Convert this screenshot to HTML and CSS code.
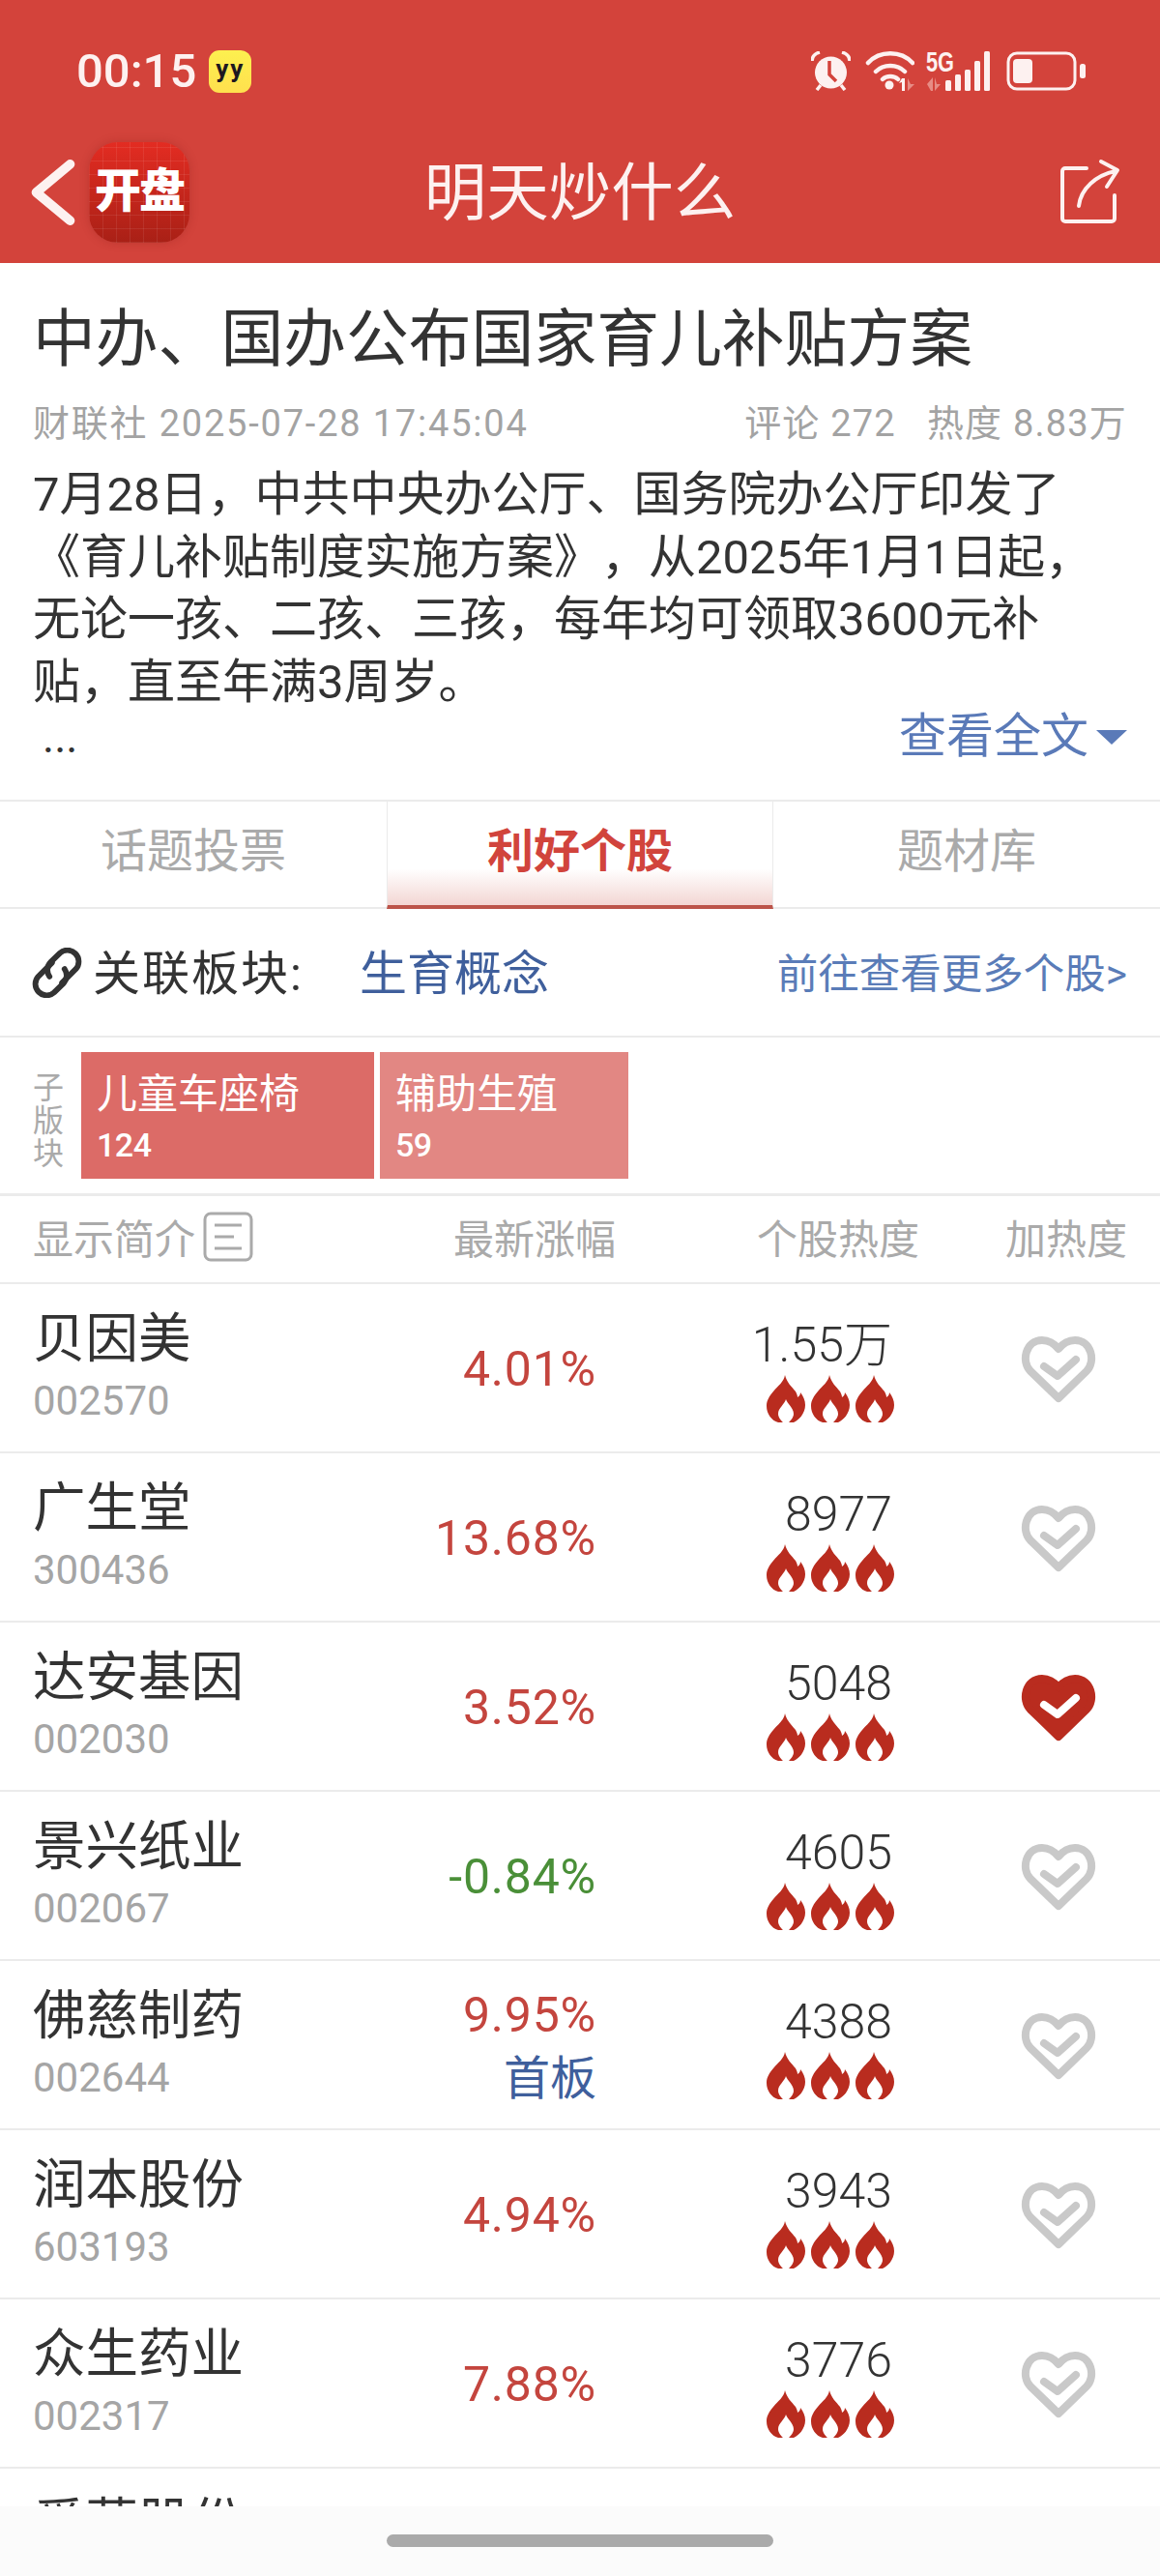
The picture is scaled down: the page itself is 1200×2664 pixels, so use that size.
FILE: index.html
```html
<!DOCTYPE html>
<html lang="zh-CN">

<head>
  <meta charset="UTF-8">
  <title>明天炒什么</title>
  <link rel="stylesheet" href="styles.css">
</head>

<body>
  <svg class="sprite">
    <symbol id="flame" viewBox="0 0 40 49">
      <path fill="#b92c1f" d="M19 0c2 8 7 12 11 17 1 2 2 4 2 6 2-1 3-3 3-5 3 4 5 8 5 13 0 9-7 16-12 18H12C5 47 0 40 0 32c0-6 3-10 7-15 5-6 11-10 12-17z"/>
      <path fill="#fff" d="M20 25c1 4 8 9 8 15 0 4-3 7-5 9h-6c-2-2-5-5-5-9 0-6 7-10 8-15z"/>
    </symbol>
    <symbol id="heart" viewBox="0 0 78 70">
      <path fill="none" stroke="#c9c9c9" stroke-width="8" stroke-linejoin="round" d="M39 65 10 37C0 27 5 5 22 5c8 0 13 4 17 9 4-5 9-9 17-9 17 0 22 22 12 32z"/>
      <path fill="none" stroke="#c9c9c9" stroke-width="8" stroke-linecap="round" stroke-linejoin="round" d="M24 32 38 42 57 25"/>
    </symbol>
    <symbol id="heart-on" viewBox="0 0 78 70">
      <path fill="#b92c1f" stroke="#b92c1f" stroke-width="8" stroke-linejoin="round" d="M39 65 10 37C0 27 5 5 22 5c8 0 13 4 17 9 4-5 9-9 17-9 17 0 22 22 12 32z"/>
      <path fill="none" stroke="#fff" stroke-width="8" stroke-linecap="round" stroke-linejoin="round" d="M24 32 38 42 57 25"/>
    </symbol>
  </svg>

  <header class="top">
    <div class="status">
      <div class="status-left">
        <span class="time">00:15</span>
        <span class="yy">yy</span>
      </div>
      <div class="status-right">
        <svg class="ic-alarm" viewBox="0 0 41 41">
          <circle cx="20.5" cy="22" r="16.5" fill="#fdf1f0"/>
          <path d="M1 10C1 5 5 2 9 1M40 10C40 5 36 2 32 1M6 40l4-5M35 40l-4-5" fill="none" stroke="#fdf1f0" stroke-width="3.5"/>
          <path d="M19 10V24L26 31" fill="none" stroke="#d3433b" stroke-width="3.5"/>
        </svg>
        <svg class="ic-wifi" viewBox="0 2 51 41">
          <path d="M3 14C15 1 37 1 49 14M11 23C19 15 33 15 41 23M18 31C22 27 30 27 34 31" fill="none" stroke="#fdf1f0" stroke-width="4.5" stroke-linecap="round"/>
          <circle cx="25" cy="37" r="4.5" fill="#fdf1f0"/>
          <path d="M38 30h3v13h-3v-9l-3 1z" fill="#fdf1f0"/>
          <path d="M44 30v13l7-7h-4z" fill="#e78c85"/>
        </svg>
        <div class="signal">
          <span class="five-g">5G</span>
          <svg class="ic-signal" viewBox="0 0 67 41">
            <path d="M1 34l6-7v14h-2zM9 27v14l6-7h-4z" fill="#e78c85"/>
            <rect x="20" y="30" width="6" height="11" rx="1.5" fill="#fdf1f0"/>
            <rect x="30" y="24" width="6" height="17" rx="1.5" fill="#fdf1f0"/>
            <rect x="40" y="19" width="6" height="22" rx="1.5" fill="#fdf1f0"/>
            <rect x="50" y="10" width="6" height="31" rx="1.5" fill="#fdf1f0"/>
            <rect x="60" y="0" width="6" height="41" rx="1.5" fill="#fdf1f0"/>
          </svg>
        </div>
        <svg class="ic-battery" viewBox="0 0 82 41">
          <rect x="2" y="2" width="69" height="37" rx="9" fill="none" stroke="#fdf1f0" stroke-width="3"/>
          <rect x="7" y="8" width="20" height="25" rx="4" fill="#fdf1f0"/>
          <rect x="76" y="13" width="6" height="15" rx="2.5" fill="#fdf1f0"/>
        </svg>
      </div>
    </div>
    <nav class="bar">
      <div class="bar-left">
        <svg class="ic-back" viewBox="0 0 48 70">
          <path d="M42 5 6 35l36 30" fill="none" stroke="#fdf1f0" stroke-width="10" stroke-linecap="round" stroke-linejoin="round"/>
        </svg>
        <div class="logo">开盘</div>
      </div>
      <h1 class="bar-title">明天炒什么</h1>
      <div class="bar-right">
        <svg class="ic-share" viewBox="0 0 70 74">
          <path d="M30 11H8a3 3 0 0 0-3 3V63a3 3 0 0 0 3 3H56a3 3 0 0 0 3-3V39" fill="none" stroke="#fdf1f0" stroke-width="4" stroke-linecap="round"/>
          <path d="M22 50C24 32 40 18 60 14M45 4 62 13 51 30" fill="none" stroke="#fdf1f0" stroke-width="4" stroke-linecap="round" stroke-linejoin="round"/>
        </svg>
      </div>
    </nav>
  </header>

  <main class="content">
    <article class="article">
      <h2 class="article-title">中办、国办公布国家育儿补贴方案</h2>
      <div class="meta">
        <span class="meta-left">财联社 2025-07-28 17:45:04</span>
        <span class="meta-right"><span>评论 272</span><span>热度 8.83万</span></span>
      </div>
      <p class="summary">7月28日，中共中央办公厅、国务院办公厅印发了<br>《育儿补贴制度实施方案》，从2025年1月1日起，<br>无论一孩、二孩、三孩，每年均可领取3600元补<br>贴，直至年满3周岁。</p>
      <div class="more-row">
        <span class="dots">...</span>
        <span class="more">查看全文<i class="caret"></i></span>
      </div>
    </article>

    <div class="tabs">
      <div class="tab">话题投票</div>
      <div class="tab active">利好个股</div>
      <div class="tab">题材库</div>
    </div>

    <div class="sector">
      <svg class="ic-link" viewBox="6 6 40 40">
        <path d="M22 18 11 29a9 9 0 0 0 12.7 12.7L31 34.5a9 9 0 0 0 1-11.5" fill="none" stroke="#333" stroke-width="4.5" stroke-linecap="round"/>
        <path d="M30 34 41 23a9 9 0 0 0-12.7-12.7L21 17.5a9 9 0 0 0-1 11.5" fill="none" stroke="#333" stroke-width="4.5" stroke-linecap="round"/>
      </svg>
      <span class="sector-label">关联板块:</span>
      <span class="sector-name">生育概念</span>
      <span class="sector-link">前往查看更多个股&gt;</span>
    </div>

    <div class="sub">
      <div class="sub-label">子<br>版<br>块</div>
      <div class="block block-a"><span class="block-name">儿童车座椅</span><span class="block-num">124</span></div>
      <div class="block block-b"><span class="block-name">辅助生殖</span><span class="block-num">59</span></div>
    </div>

    <div class="thead">
      <div class="th-intro">显示简介
        <svg class="ic-intro" viewBox="0 0 52 52">
          <rect x="2" y="2" width="48" height="48" rx="6" fill="none" stroke="#aaa" stroke-width="3"/>
          <path d="M12 14H40M12 26H32M12 38H40" fill="none" stroke="#aaa" stroke-width="3"/>
        </svg>
      </div>
      <div class="th-pct">最新涨幅</div>
      <div class="th-heat">个股热度</div>
      <div class="th-add">加热度</div>
    </div>

    <div class="row">
      <div class="name-col"><div class="name">贝因美</div><div class="code">002570</div></div>
      <div class="pct up">4.01%</div>
      <div class="heat"><div class="heat-num">1.55万</div><div class="flames"><svg><use href="#flame"/></svg><svg><use href="#flame"/></svg><svg><use href="#flame"/></svg></div></div>
      <svg class="heart"><use href="#heart"/></svg>
    </div>
    <div class="row">
      <div class="name-col"><div class="name">广生堂</div><div class="code">300436</div></div>
      <div class="pct up">13.68%</div>
      <div class="heat"><div class="heat-num">8977</div><div class="flames"><svg><use href="#flame"/></svg><svg><use href="#flame"/></svg><svg><use href="#flame"/></svg></div></div>
      <svg class="heart"><use href="#heart"/></svg>
    </div>
    <div class="row">
      <div class="name-col"><div class="name">达安基因</div><div class="code">002030</div></div>
      <div class="pct up">3.52%</div>
      <div class="heat"><div class="heat-num">5048</div><div class="flames"><svg><use href="#flame"/></svg><svg><use href="#flame"/></svg><svg><use href="#flame"/></svg></div></div>
      <svg class="heart"><use href="#heart-on"/></svg>
    </div>
    <div class="row">
      <div class="name-col"><div class="name">景兴纸业</div><div class="code">002067</div></div>
      <div class="pct down">-0.84%</div>
      <div class="heat"><div class="heat-num">4605</div><div class="flames"><svg><use href="#flame"/></svg><svg><use href="#flame"/></svg><svg><use href="#flame"/></svg></div></div>
      <svg class="heart"><use href="#heart"/></svg>
    </div>
    <div class="row">
      <div class="name-col"><div class="name">佛慈制药</div><div class="code">002644</div></div>
      <div class="pct up">9.95%<div class="board">首板</div></div>
      <div class="heat"><div class="heat-num">4388</div><div class="flames"><svg><use href="#flame"/></svg><svg><use href="#flame"/></svg><svg><use href="#flame"/></svg></div></div>
      <svg class="heart"><use href="#heart"/></svg>
    </div>
    <div class="row">
      <div class="name-col"><div class="name">润本股份</div><div class="code">603193</div></div>
      <div class="pct up">4.94%</div>
      <div class="heat"><div class="heat-num">3943</div><div class="flames"><svg><use href="#flame"/></svg><svg><use href="#flame"/></svg><svg><use href="#flame"/></svg></div></div>
      <svg class="heart"><use href="#heart"/></svg>
    </div>
    <div class="row">
      <div class="name-col"><div class="name">众生药业</div><div class="code">002317</div></div>
      <div class="pct up">7.88%</div>
      <div class="heat"><div class="heat-num">3776</div><div class="flames"><svg><use href="#flame"/></svg><svg><use href="#flame"/></svg><svg><use href="#flame"/></svg></div></div>
      <svg class="heart"><use href="#heart"/></svg>
    </div>
    <div class="row">
      <div class="name-col"><div class="name">爱慕股份</div></div>
    </div>
  </main>

  <footer class="home">
    <div class="home-pill"></div>
  </footer>
</body>

</html>
```

FILE: styles.css
```css
* {
  box-sizing: border-box;
}

body {
  margin: 0;
  width: 1200px;
  height: 2664px;
  display: flex;
  flex-direction: column;
  overflow: hidden;
  background: #fff;
  color: #333;
  font-family: Roboto, "Noto Sans CJK SC", sans-serif;
}

.sprite {
  display: none;
}

/* header */
.top {
  height: 272px;
  flex: none;
  background: #d3433b;
  color: #fdf1f0;
}

.status {
  height: 147px;
  padding: 52px 77px 0 79px;
  display: flex;
  justify-content: space-between;
  align-items: flex-start;
}

.status-left {
  display: flex;
  align-items: center;
  gap: 13px;
}

.time {
  font-size: 49px;
  line-height: 44px;
  font-weight: 500;
}

.yy {
  width: 44px;
  height: 44px;
  border-radius: 11px;
  background: linear-gradient(#fdf04f, #ffe04e);
  color: #1d1820;
  font-size: 26px;
  font-weight: 700;
  line-height: 38px;
  letter-spacing: 2px;
  text-align: center;
}

.status-right {
  display: flex;
  align-items: flex-end;
  margin-top: 1px;
}

.ic-alarm {
  width: 41px;
  height: 41px;
}

.ic-wifi {
  width: 51px;
  height: 41px;
  margin-left: 15px;
}

.signal {
  position: relative;
  width: 67px;
  height: 41px;
  margin-left: 12px;
}

.ic-signal {
  width: 67px;
  height: 41px;
}

/* sits in the empty corner above the bars */
.five-g {
  position: absolute;
  left: 0;
  top: -4px;
  font-family: "Liberation Sans", sans-serif;
  font-size: 29px;
  font-weight: 700;
  line-height: 30px;
  transform: scaleX(.75);
  transform-origin: left;
}

.ic-battery {
  width: 82px;
  height: 41px;
  margin-left: 16px;
}

.bar {
  height: 125px;
  display: grid;
  grid-template-columns: 1fr auto 1fr;
  align-items: start;
}

.bar-left {
  display: flex;
  align-items: flex-start;
  padding-left: 31px;
}

.ic-back {
  width: 48px;
  height: 68px;
  margin-top: 18px;
}

.logo {
  width: 104px;
  height: 104px;
  margin-left: 13px;
  border-radius: 30px;
  background:
    repeating-linear-gradient(90deg, rgba(255, 255, 255, .08) 0 1px, transparent 1px 14px),
    repeating-linear-gradient(0deg, rgba(255, 255, 255, .08) 0 1px, transparent 1px 14px),
    linear-gradient(#e32c22, #a92016);
  box-shadow: 0 0 10px rgba(120, 20, 15, .25);
  color: #fff;
  font-size: 48px;
  font-weight: 900;
  line-height: 102px;
  letter-spacing: -2px;
  text-align: center;
  white-space: nowrap;
}

.bar-title {
  margin: 0;
  font-size: 64.5px;
  font-weight: 400;
  line-height: 106px;
}

.bar-right {
  display: flex;
  justify-content: flex-end;
  padding-right: 36px;
}

.ic-share {
  width: 70px;
  height: 74px;
  margin-top: 16px;
}

/* article */
.content {
  flex: 1;
  min-height: 0;
  overflow: hidden;
}

.article {
  height: 555px;
  padding: 31px 34px 0;
}

.article-title {
  margin: 0;
  font-size: 64.8px;
  font-weight: 400;
  line-height: 96px;
}

.meta {
  display: flex;
  justify-content: space-between;
  margin-top: 11px;
  color: #a3a3a3;
  font-size: 38px;
  line-height: 56px;
}

.meta-left {
  letter-spacing: 1.8px;
}

.meta-right {
  display: flex;
  gap: 32px;
  letter-spacing: 1.2px;
}

.summary {
  margin: 14px 0 0;
  font-size: 49px;
  line-height: 64.6px;
  white-space: nowrap;
  text-spacing-trim: space-all;
}

.more-row {
  display: flex;
  justify-content: space-between;
  margin-top: -11px;
  line-height: 60px;
}

.dots {
  padding-left: 10px;
  font-size: 46px;
  line-height: 70px;
}

.more {
  display: flex;
  align-items: center;
  gap: 8px;
  color: #5a7ab8;
  font-size: 49px;
}

.caret {
  width: 0;
  height: 0;
  border-style: solid;
  border-width: 15px 16px 0;
  border-color: #5a7ab8 transparent transparent;
}

/* tabs */
.tabs {
  height: 113px;
  display: grid;
  grid-template-columns: 400px 400px 400px;
  border-top: 2px solid #ebebeb;
  border-bottom: 2px solid #ebebeb;
  color: #aaa;
  font-size: 48px;
  text-align: center;
  line-height: 104px;
}

.tab.active {
  margin-bottom: -2px;
  border-left: 1px solid #ebebeb;
  border-right: 1px solid #ebebeb;
  border-bottom: 4px solid #bc5449;
  background: linear-gradient(#fff 65%, #f3d6d3);
  color: #d1443c;
  font-weight: 700;
}

/* sector */
.sector {
  height: 133px;
  display: flex;
  align-items: center;
  padding: 0 34px 0 33px;
  border-bottom: 2px solid #ebebeb;
  font-size: 49px;
  line-height: 60px;
}

.sector-label,
.sector-name,
.sector-link {
  padding-top: 4px;
}

.ic-link {
  width: 52px;
  height: 52px;
  margin-right: 11px;
}

.sector-label {
  letter-spacing: 2px;
}

.sector-name {
  margin-left: 58px;
  color: #3f5f9c;
}

.sector-link {
  margin-left: auto;
  color: #5a7cb8;
  font-size: 42.5px;
}

.sub {
  height: 164px;
  display: flex;
  align-items: flex-start;
  padding: 15px 0 0 34px;
  border-bottom: 3px solid #ebebeb;
}

.sub-label {
  width: 50px;
  padding-top: 20px;
  color: #aaa;
  font-size: 32px;
  line-height: 34px;
}

.block {
  height: 131px;
  display: flex;
  flex-direction: column;
  color: #fff;
  padding: 14px 0 0 16px;
}

.block-a {
  width: 303px;
  background: #dc6b67;
}

.block-b {
  width: 257px;
  margin-left: 6px;
  background: #e28783;
}

.block-name {
  font-size: 42px;
  line-height: 60px;
}

.block-num {
  font-size: 34px;
  font-weight: 500;
  line-height: 44px;
  letter-spacing: -.5px;
}

/* table */
.thead {
  height: 91px;
  display: flex;
  align-items: center;
  padding: 0 34px 6px;
  border-bottom: 2px solid #ebebeb;
  color: #aaa;
  font-size: 42px;
}

.th-intro {
  width: 340px;
  display: flex;
  align-items: center;
  gap: 8px;
}

.ic-intro {
  width: 52px;
  height: 52px;
}

.th-pct {
  margin-left: 95px;
}

.th-heat {
  margin-left: 146px;
}

.th-add {
  margin-left: auto;
}

.row {
  height: 175px;
  display: grid;
  grid-template-columns: 340px 243px 306px 1fr;
  align-items: start;
  padding-left: 34px;
  border-bottom: 2px solid #ebebeb;
}

.name {
  padding-top: 24px;
  padding-bottom: 1px;
  font-size: 54.5px;
  line-height: 64px;
}

.code {
  color: #a5a5a5;
  font-size: 42px;
  line-height: 64px;
}

.pct {
  padding-top: 55px;
  font-size: 50px;
  line-height: 66px;
  letter-spacing: .8px;
  text-align: right;
}

.pct.up {
  color: #c4453e;
}

.pct.down {
  color: #4a8f38;
}

.pct:has(.board) {
  padding-top: 23px;
}

.board {
  color: #3f5f9c;
  font-size: 48px;
  letter-spacing: 0;
}

.heat {
  text-align: right;
}

.heat-num {
  padding-top: 33px;
  margin-bottom: 1px;
  font-size: 50px;
  font-weight: 300;
  line-height: 60px;
}

.flames {
  display: flex;
  justify-content: flex-end;
  gap: 6px;
  margin-right: -2px;
}

.flames svg {
  width: 40px;
  height: 49px;
}

.heart {
  width: 78px;
  height: 70px;
  margin: 53px 66px 0 0;
  justify-self: end;
}

.home {
  height: 72px;
  flex: none;
  display: flex;
  justify-content: center;
  padding-top: 29px;
  background: #fbfbfb;
}

.home-pill {
  width: 400px;
  height: 13px;
  border-radius: 7px;
  background: #aaa;
}
```
